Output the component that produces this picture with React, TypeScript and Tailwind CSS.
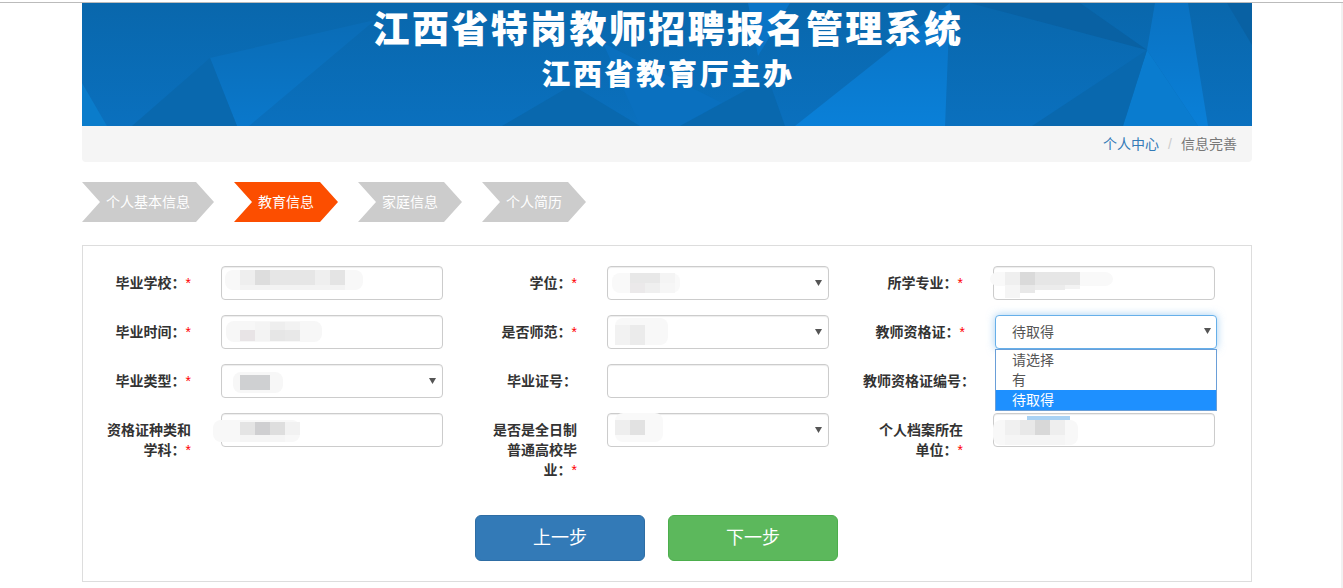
const cn = "font-['Liberation_Sans','Noto_Sans_CJK_SC',sans-serif]";

type Patch = [number, number, number, number, string];

// mosaic patches that hide the personal values, coordinates relative to the field
const smudges: Record<string, Patch[]> = {
  school: [
    [4, 4, 138, 20, "#f8f8f8"],
    [19, 4, 15, 15, "#eeeeee"], [34, 4, 15, 15, "#dddddd"], [49, 4, 45, 15, "#e6e6e6"], [94, 4, 15, 15, "#efefef"], [109, 4, 15, 15, "#e4e4e4"],
    [19, 19, 105, 5, "#f3f3f3"],
  ],
  gradDate: [
    [5, 6, 96, 21, "#f7f7f7"],
    [34, 7, 15, 8, "#f4f4f4"], [49, 7, 15, 8, "#eeeeee"], [64, 7, 15, 8, "#f2f2f2"],
    [19, 15, 15, 11, "#e8e4e6"], [34, 15, 15, 11, "#f3f3f3"], [49, 15, 15, 11, "#e6e6e6"], [64, 15, 15, 11, "#e8e8e8"],
  ],
  gradType: [
    [12, 8, 50, 21, "#f7f7f7"],
    [19, 11, 30, 15, "#cfd0d2"],
  ],
  certKind: [
    [-8, 7, 87, 22, "#f8f8f8"],
    [19, 9, 15, 13, "#e4e4e4"], [34, 9, 15, 13, "#cfcfd1"], [49, 9, 15, 13, "#dedede"], [64, 9, 15, 13, "#f2f2f2"],
    [19, 22, 45, 7, "#f5f5f5"],
  ],
  degree: [
    [5, 7, 68, 20, "#f9f9f9"],
    [23, 7, 30, 10, "#e8e8e8"], [53, 7, 15, 10, "#f4f4f4"],
    [23, 17, 15, 10, "#ebe9ea"], [38, 17, 15, 10, "#efefef"], [53, 17, 15, 10, "#f6f6f6"],
  ],
  normal: [
    [8, 3, 53, 27, "#f8f8f8"],
    [8, 10, 15, 20, "#f2f2f2"], [23, 10, 15, 20, "#ebebeb"],
  ],
  fullTime: [
    [8, 0, 48, 29, "#f9f9f9"],
    [8, 7, 15, 15, "#eeeeee"], [23, 7, 15, 15, "#e2e2e2"],
  ],
  major: [
    [-3, 6, 123, 14, "#f9f9f9"],
    [12, 6, 15, 13, "#efefef"], [27, 6, 15, 13, "#dadada"], [42, 6, 45, 13, "#e6e6e6"],
    [12, 19, 15, 13, "#f5f5f5"], [27, 19, 15, 8, "#e8e8e8"], [42, 19, 30, 5, "#ececec"], [72, 19, 15, 4, "#f3f3f3"],
  ],
  archive: [
    [0, 7, 85, 25, "#f8f8f8"],
    [34, 3, 43, 4, "#a9d2f4"],
    [12, 7, 15, 15, "#f0f0f0"], [27, 7, 15, 15, "#e8e8e8"], [42, 7, 15, 15, "#d8d8d8"], [57, 7, 15, 15, "#eeeeee"],
    [12, 22, 60, 10, "#f5f5f5"],
  ],
};

function Smudge({ name }: { name?: string }) {
  if (!name) return null;
  return (
    <svg width="222" height="34" className="pointer-events-none absolute left-0 top-0 overflow-visible">
      {smudges[name].map(([x, y, w, h, fill], i) => (
        <rect key={i} x={x} y={y} width={w} height={h} rx={i === 0 ? 8 : 0} fill={fill} />
      ))}
    </svg>
  );
}

function Arrow({ className }: { className: string }) {
  return (
    <svg width="7" height="6" viewBox="0 0 7 6" className={className}>
      <path d="M0 0H7L3.5 6Z" fill="#555" />
    </svg>
  );
}

function Label({ lines, star = true, shifted }: { lines: string[]; star?: boolean; shifted?: boolean }) {
  return (
    <label
      className={`shrink-0 whitespace-nowrap pt-[7px] text-right text-[14px] font-bold leading-5 text-[#333] ${
        shifted ? "w-[102px]" : "w-[100px]"
      }`}
    >
      {lines.map((line, i) => (
        <span key={line}>
          {line}
          {i < lines.length - 1 ? <br /> : null}
        </span>
      ))}
      {star ? <span className="font-normal text-[#f00]">*</span> : null}
    </label>
  );
}

function TextField({ blur }: { blur?: string }) {
  return (
    <div className="relative h-[34px] w-[222px]">
      <input
        type="text"
        readOnly
        className="h-full w-full rounded-[4px] border border-[#ccc] bg-white shadow-[inset_0_1px_1px_rgba(0,0,0,0.075)]"
      />
      <Smudge name={blur} />
    </div>
  );
}

function SelectField({ blur }: { blur?: string }) {
  return (
    <div className="relative h-[34px] w-[222px] rounded-[4px] border border-[#ccc] bg-white shadow-[inset_0_1px_1px_rgba(0,0,0,0.075)]">
      <div className="absolute -left-px -top-px">
        <Smudge name={blur} />
      </div>
      <Arrow className="absolute right-[6px] top-[13px]" />
    </div>
  );
}

function OpenSelect() {
  return (
    <div className="relative h-[34px] w-[222px]">
      <div className="flex h-full items-center rounded-[4px] border border-[#66afe9] bg-white pl-4 pt-px text-[14px] text-[#555] shadow-[0_0_8px_rgba(102,175,233,0.6)]">
        待取得
      </div>
      <Arrow className="absolute right-[6px] top-[13px]" />
      <ul className="absolute left-0 top-[34px] z-10 w-[222px] border border-[#6a9fd8] bg-white text-[14px] leading-5 text-[#555]">
        <li className="pl-4">请选择</li>
        <li className="pl-4">有</li>
        <li className="bg-[#1e90ff] pl-4 text-white">待取得</li>
      </ul>
    </div>
  );
}

function Field({ label, star, shifted, children }: { label: string[]; star?: boolean; shifted?: boolean; children?: React.ReactNode }) {
  return (
    <div className="flex items-start gap-[30px]">
      <Label lines={label} star={star} shifted={shifted} />
      {children}
    </div>
  );
}

function Step({ text, active, wide }: { text: string; active?: boolean; wide?: boolean }) {
  return (
    <div
      className={`flex h-10 items-center justify-center text-[14px] text-white [clip-path:polygon(0_0,calc(100%-18px)_0,100%_50%,calc(100%-18px)_100%,0_100%,18px_50%)] ${
        wide ? "w-[132px]" : "w-[104px]"
      } ${active ? "bg-[#fc4e00]" : "bg-[#ccc]"}`}
    >
      {text}
    </div>
  );
}

function BannerArt() {
  return (
    <svg viewBox="0 0 1170 123" width="1170" height="123" className="absolute left-0 top-0">
      <defs>
        <linearGradient id="bannerBase" x1="0" y1="0" x2="0" y2="1">
          <stop offset="0" stopColor="#0967ac" />
          <stop offset="1" stopColor="#0a70be" />
        </linearGradient>
        <linearGradient id="bannerBright" x1="0" y1="0" x2="0" y2="1">
          <stop offset="0" stopColor="#0a72c2" />
          <stop offset="1" stopColor="#0a80d8" />
        </linearGradient>
        <linearGradient id="bannerMid" x1="0" y1="0" x2="0" y2="1">
          <stop offset="0" stopColor="#0a6cb6" />
          <stop offset="1" stopColor="#0a78cb" />
        </linearGradient>
      </defs>
      <rect width="1170" height="123" fill="url(#bannerBase)" />
      <polygon points="128,55 293,17 167,123 155,123" fill="url(#bannerMid)" />
      <polygon points="128,55 155,123 50,123" fill="#0968ae" />
      <polygon points="0,80 25,123 0,123" fill="#0a7ccb" />
      <polygon points="420,123 490,82 558,123" fill="#0968ae" />
      <polygon points="521,40 558,123 598,123 640,100" fill="#0a70bf" />
      <polygon points="598,123 686,75 703,123" fill="#0968ae" />
      <polygon points="713,123 868,0 863,123" fill="url(#bannerBright)" />
      <polygon points="666,0 708,0 676,53" fill="#0a74c6" />
      <polygon points="888,0 1065,47 998,0" fill="#0961a3" />
      <polygon points="1073,0 1106,0 1126,123 1116,123 1065,47" fill="url(#bannerBright)" />
      <polygon points="1065,47 1041,123 1116,123" fill="#0a7ccf" />
      <polygon points="1065,47 950,123 1041,123" fill="#0968ae" />
      <polygon points="1145,0 1170,42 1170,0" fill="#0961a3" />
    </svg>
  );
}

export default function App() {
  return (
    <div className={`h-[588px] overflow-hidden bg-white pt-[2px] ${cn}`}>
      <div className="flex h-full border-t border-[#bbb]">
        <div className="ml-[82px] w-[1170px]">
          <div className="relative h-[123px] overflow-hidden pl-[2px] text-center font-black text-white">
            <BannerArt />
            <div className="relative pt-[5px] text-[37px] leading-[46px] tracking-[2.4px]">江西省特岗教师招聘报名管理系统</div>
            <div className="relative mt-px text-[29px] leading-[40px] tracking-[2.7px]">江西省教育厅主办</div>
          </div>

          <div className="flex h-9 items-center justify-end rounded-b-[4px] bg-[#f5f5f5] pr-[15px] text-[14px]">
            <span className="text-[#337ab7]">个人中心</span>
            <span className="px-[9px] text-[#ccc]">/</span>
            <span className="text-[#777]">信息完善</span>
          </div>

          <div className="mt-5 flex gap-5">
            <Step text="个人基本信息" wide />
            <Step text="教育信息" active />
            <Step text="家庭信息" />
            <Step text="个人简历" />
          </div>

          <div className="mt-[23px] h-[337px] border border-[#ddd] pl-2 pt-5">
            <div className="grid grid-cols-[repeat(3,386px)] grid-rows-[49px_49px_49px_auto]">
              <Field label={["毕业学校："]}><TextField blur="school" /></Field>
              <Field label={["学位："]}><SelectField blur="degree" /></Field>
              <Field label={["所学专业："]}><TextField blur="major" /></Field>

              <Field label={["毕业时间："]}><TextField blur="gradDate" /></Field>
              <Field label={["是否师范："]}><SelectField blur="normal" /></Field>
              <Field label={["教师资格证："]} shifted><OpenSelect /></Field>

              <Field label={["毕业类型："]}><SelectField blur="gradType" /></Field>
              <Field label={["毕业证号："]} star={false}><TextField /></Field>
              <Field label={["教师资格证编号："]} star={false} />

              <Field label={["资格证种类和", "学科："]}><TextField blur="certKind" /></Field>
              <Field label={["是否是全日制", "普通高校毕", "业："]}><SelectField blur="fullTime" /></Field>
              <Field label={["个人档案所在", "单位："]}><TextField blur="archive" /></Field>
            </div>

            <div className="ml-[384px] mt-[35px] flex gap-[23px] text-[18px] text-white">
              <button type="button" className="h-[46px] w-[170px] rounded-[6px] border border-[#2e6da4] bg-[#337ab7]">上一步</button>
              <button type="button" className="h-[46px] w-[170px] rounded-[6px] border border-[#4cae4c] bg-[#5cb85c]">下一步</button>
            </div>
          </div>
        </div>
        <div className="ml-auto w-[2px] bg-[#f1f1f1]" />
      </div>
    </div>
  );
}
